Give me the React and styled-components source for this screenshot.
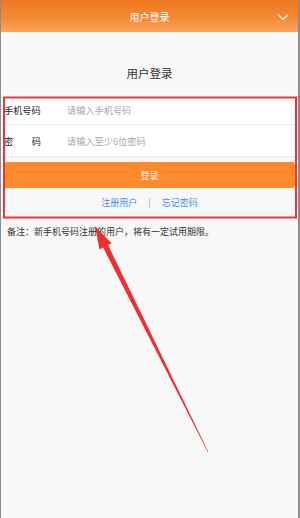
import React from "react";
import styled, { createGlobalStyle } from "styled-components";

const Global = createGlobalStyle`
  html, body { margin: 0; padding: 0; background: #f8f8f8; }
  body { font-family: "Noto Sans CJK SC", "Noto Sans", sans-serif; }
  * { box-sizing: border-box; }
`;

const Page = styled.div`
  position: relative;
  width: 300px;
  height: 518px;
  background: #f8f8f8;
  border-left: 1px solid #8c8c8c;
  border-right: 2px solid #8c8c8c;
  overflow: hidden;
`;

const Header = styled.div`
  height: 32px;
  background: linear-gradient(180deg, #ef7620 0%, #f58a35 55%, #fca55c 100%);
  display: flex;
  align-items: center;
  justify-content: center;
  position: relative;
  color: #fff;
  font-size: 10px;
`;

const Chevron = styled.svg`
  position: absolute;
  right: 9px;
  top: 13px;
`;

const Heading = styled.div`
  text-align: center;
  font-size: 11.5px;
  color: #333;
  margin-top: 33px;
  height: 16px;
  line-height: 16px;
`;

const Form = styled.div`
  margin-top: 15px;
  display: flex;
  flex-direction: column;
`;

const Row = styled.div`
  display: flex;
  align-items: center;
  height: ${(p) => p.$h}px;
  background: #fff;
  border-bottom: 1px solid #eeeeee;
  padding-left: 3px;
  font-size: 9.2px;
`;

const Label = styled.div`
  width: 37px;
  display: flex;
  justify-content: space-between;
  color: #222;
  margin-right: 26px;
`;

const Placeholder = styled.div`
  color: #a8a8a8;
`;

const Button = styled.div`
  margin: 5px 3px 0 3px;
  height: 26px;
  background: #fd8b2c;
  border-radius: 3px;
  color: #fff;
  font-size: 9px;
  display: flex;
  align-items: center;
  justify-content: center;
`;

const Links = styled.div`
  height: 28px;
  display: flex;
  align-items: center;
  justify-content: center;
  gap: 11px;
  font-size: 9px;
  color: #4a8fdb;
`;

const Sep = styled.span`
  color: #7aa9e0;
`;

const Note = styled.div`
  margin-top: 9px;
  padding-left: 6px;
  font-size: 9px;
  color: #333;
`;

const Overlay = styled.svg`
  position: absolute;
  left: -1px;
  top: 0;
  pointer-events: none;
`;

export default function App() {
  return (
    <>
      <Global />
      <Page>
        <Header>
          用户登录
          <Chevron width="12" height="8" viewBox="0 0 12 8">
            <path d="M1 1.5 L6 6.5 L11 1.5" fill="none" stroke="#fff" strokeWidth="1.2" />
          </Chevron>
        </Header>
        <Heading>用户登录</Heading>
        <Form>
          <Row $h={29}>
            <Label>
              <span>手机号码</span>
            </Label>
            <Placeholder>请输入手机号码</Placeholder>
          </Row>
          <Row $h={32}>
            <Label>
              <span>密</span>
              <span>码</span>
            </Label>
            <Placeholder>请输入至少6位密码</Placeholder>
          </Row>
          <Button>登录</Button>
          <Links>
            <span>注册用户</span>
            <Sep>|</Sep>
            <span>忘记密码</span>
          </Links>
        </Form>
        <Note>备注：新手机号码注册的用户，将有一定试用期限。</Note>
        <Overlay width="300" height="518" viewBox="0 0 300 518">
          <rect x="4" y="97.5" width="292" height="120" fill="none" stroke="#e8363a" strokeWidth="2" />
          <polygon
            points="95,226 111.6,243.3 108.1,245.1 208.4,451.9 207.8,452.1 103.2,247.6 99.5,249.5"
            fill="#ee2f2f"
          />
        </Overlay>
      </Page>
    </>
  );
}
